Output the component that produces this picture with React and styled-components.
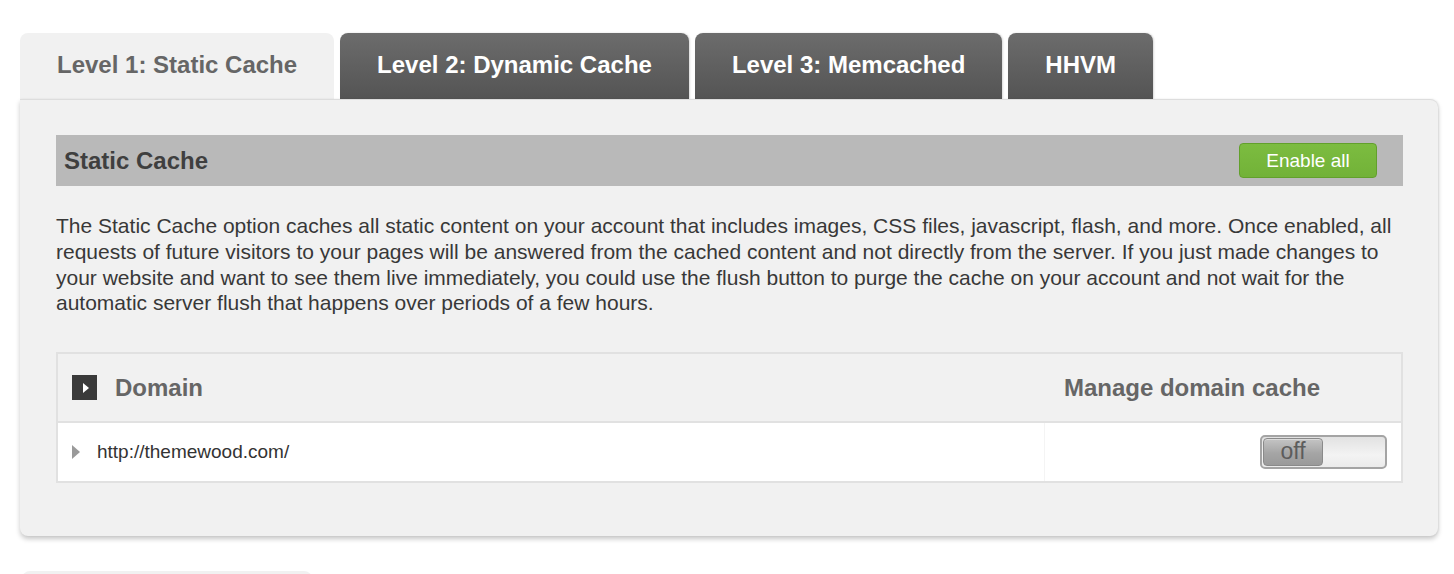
import React from "react";
import styled, { createGlobalStyle } from "styled-components";

const Global = createGlobalStyle`
  html, body { margin: 0; padding: 0; background: #ffffff; }
  body { font-family: "Liberation Sans", Arial, sans-serif; }
  * { box-sizing: border-box; }
`;

const Page = styled.div`
  padding: 33px 16px 0 20px;
  display: flex;
  flex-direction: column;
  gap: 35px;
`;

const Block = styled.section`
  display: flex;
  flex-direction: column;
`;

const TabBar = styled.div`
  display: flex;
  gap: 6px;
  align-items: flex-end;
`;

const Tab = styled.div`
  height: 66px;
  padding: 0 37px 2px;
  display: flex;
  align-items: center;
  border-radius: 8px 8px 0 0;
  font-size: 24px;
  font-weight: 700;
  white-space: nowrap;
  color: ${(p) => (p.$active ? "#666666" : "#ffffff")};
  background: ${(p) =>
    p.$active ? "#f1f1f1" : "linear-gradient(#6c6c6c, #545454)"};
  box-shadow: ${(p) => (p.$active ? "none" : "1px 0 2px rgba(0,0,0,0.15)")};
`;

const Panel = styled.div`
  background: #f1f1f1;
  border-top: 1px solid #dddddd;
  border-radius: 0 8px 8px 8px;
  box-shadow: 0 3px 5px rgba(0, 0, 0, 0.22), 1px 0 2px rgba(0, 0, 0, 0.06);
  padding: 35px 35px 53px 36px;
`;

const SectionHeader = styled.div`
  height: 51px;
  background: #b9b9b9;
  display: flex;
  align-items: center;
  justify-content: space-between;
  padding: 0 26px 0 8px;
`;

const SectionTitle = styled.h2`
  margin: 0;
  font-size: 24px;
  font-weight: 700;
  color: #3f3f3f;
`;

const GreenButton = styled.button`
  height: 35px;
  width: 138px;
  border: 1px solid #62a02c;
  border-radius: 4px;
  background: linear-gradient(#7cbc40, #72b238);
  color: #ffffff;
  font-family: "Liberation Sans", Arial, sans-serif;
  font-size: 19px;
  padding: 0;
  cursor: pointer;
`;

const Description = styled.p`
  margin: 27px 0 0;
  font-size: 21px;
  line-height: 25.8px;
  color: #383838;
`;

const Table = styled.div`
  margin-top: 36px;
  border: 2px solid #e1e1e1;
  display: flex;
  flex-direction: column;
`;

const HeadRow = styled.div`
  height: 69px;
  display: flex;
  align-items: center;
  border-bottom: 2px solid #e1e1e1;
  background: #f1f1f1;
`;

const HeadCell = styled.div`
  display: flex;
  align-items: center;
  gap: 18px;
  font-size: 24px;
  font-weight: 700;
  color: #666666;
  flex: ${(p) => (p.$grow ? 1 : "none")};
  padding: ${(p) => (p.$grow ? "0 0 0 14px" : "0 81px 0 0")};
`;

const BodyRow = styled.div`
  height: 58px;
  display: flex;
  align-items: stretch;
  background: #ffffff;
`;

const DomainCell = styled.div`
  flex: 1;
  display: flex;
  align-items: center;
  gap: 17px;
  padding-left: 14px;
  font-size: 19px;
  color: #333333;
`;

const ActionCell = styled.div`
  width: 357px;
  display: flex;
  align-items: center;
  justify-content: flex-end;
  padding-right: 14px;
  border-left: 1px solid #f4f4f4;
`;

const IconBox = styled.span`
  width: 25px;
  height: 25px;
  background: #3a3a3a;
  display: inline-flex;
  align-items: center;
  justify-content: center;
`;

const Arrow = styled.span`
  width: 0;
  height: 0;
  border-top: ${(p) => p.$h}px solid transparent;
  border-bottom: ${(p) => p.$h}px solid transparent;
  border-left: ${(p) => p.$w}px solid ${(p) => p.$color};
  margin-left: ${(p) => p.$ml || 0}px;
`;

const Toggle = styled.div`
  width: 127px;
  height: 34px;
  border: 2px solid #a4a4a4;
  border-radius: 5px;
  background: linear-gradient(#e2e2e2, #f3f3f3 60%, #ebebeb);
  padding: 1px;
  display: flex;
`;

const Knob = styled.div`
  width: 60px;
  height: 100%;
  border: 1px solid #8a8a8a;
  border-radius: 4px;
  background: linear-gradient(#c4c4c4, #a5a5a5 55%, #9a9a9a);
  box-shadow: inset 0 1px 0 rgba(255, 255, 255, 0.4);
  display: flex;
  align-items: center;
  justify-content: center;
  font-size: 23px;
  line-height: 1;
  color: #5c5c5c;
  padding-bottom: 2px;
`;

const GhostTab = styled.div`
  width: 290px;
  height: 40px;
  margin-left: 2px;
  background: #f1f1f1;
  border-radius: 8px 8px 0 0;
`;

const tabs = [
  "Level 1: Static Cache",
  "Level 2: Dynamic Cache",
  "Level 3: Memcached",
  "HHVM",
];

export default function App() {
  return (
    <>
      <Global />
      <Page>
        <Block>
          <TabBar>
            {tabs.map((t, i) => (
              <Tab key={t} $active={i === 0}>
                {t}
              </Tab>
            ))}
          </TabBar>
          <Panel>
            <SectionHeader>
              <SectionTitle>Static Cache</SectionTitle>
              <GreenButton>Enable all</GreenButton>
            </SectionHeader>
            <Description>
              The Static Cache option caches all static content on your account
              that includes images, CSS files, javascript, flash, and more. Once
              enabled, all requests of future visitors to your pages will be
              answered from the cached content and not directly from the server.
              If you just made changes to your website and want to see them live
              immediately, you could use the flush button to purge the cache on
              your account and not wait for the automatic server flush that
              happens over periods of a few hours.
            </Description>
            <Table>
              <HeadRow>
                <HeadCell $grow>
                  <IconBox>
                    <Arrow $h={5} $w={6} $color="#ffffff" $ml={2} />
                  </IconBox>
                  Domain
                </HeadCell>
                <HeadCell>Manage domain cache</HeadCell>
              </HeadRow>
              <BodyRow>
                <DomainCell>
                  <Arrow $h={7} $w={8} $color="#9a9a9a" />
                  http://themewood.com/
                </DomainCell>
                <ActionCell>
                  <Toggle>
                    <Knob>off</Knob>
                  </Toggle>
                </ActionCell>
              </BodyRow>
            </Table>
          </Panel>
        </Block>
        <Block>
          <GhostTab />
        </Block>
      </Page>
    </>
  );
}
